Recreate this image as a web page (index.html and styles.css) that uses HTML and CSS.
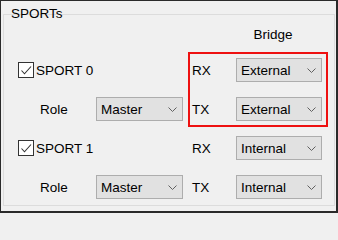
FILE: index.html
```html
<!DOCTYPE html>
<html>
<head>
<meta charset="utf-8">
<link rel="stylesheet" href="styles.css">
</head>
<body>
<div class="window">
  <div class="group">
    <div class="group-title">SPORTs</div>
    <div class="grid">
      <div class="head-spacer"></div>
      <div class="bridge-head">Bridge</div>

      <div class="check"><span class="box"><svg width="14" height="14" viewBox="0 0 14 14"><path d="M2.5 7.5 L5.5 10.8 L12 3.5" fill="none" stroke="#333" stroke-width="1.1"/></svg></span><span>SPORT 0</span></div>
      <div></div>
      <div class="io">RX</div>
      <div class="combo"><span>External</span><svg class="chev" width="9" height="5" viewBox="0 0 9 5"><path d="M0.5 0.5 L4.5 4.5 L8.5 0.5" fill="none" stroke="#606060"/></svg></div>

      <div class="role">Role</div>
      <div class="combo"><span>Master</span><svg class="chev" width="9" height="5" viewBox="0 0 9 5"><path d="M0.5 0.5 L4.5 4.5 L8.5 0.5" fill="none" stroke="#606060"/></svg></div>
      <div class="io">TX</div>
      <div class="combo"><span>External</span><svg class="chev" width="9" height="5" viewBox="0 0 9 5"><path d="M0.5 0.5 L4.5 4.5 L8.5 0.5" fill="none" stroke="#606060"/></svg></div>

      <div class="check"><span class="box"><svg width="14" height="14" viewBox="0 0 14 14"><path d="M2.5 7.5 L5.5 10.8 L12 3.5" fill="none" stroke="#333" stroke-width="1.1"/></svg></span><span>SPORT 1</span></div>
      <div></div>
      <div class="io">RX</div>
      <div class="combo"><span>Internal</span><svg class="chev" width="9" height="5" viewBox="0 0 9 5"><path d="M0.5 0.5 L4.5 4.5 L8.5 0.5" fill="none" stroke="#606060"/></svg></div>

      <div class="role">Role</div>
      <div class="combo"><span>Master</span><svg class="chev" width="9" height="5" viewBox="0 0 9 5"><path d="M0.5 0.5 L4.5 4.5 L8.5 0.5" fill="none" stroke="#606060"/></svg></div>
      <div class="io">TX</div>
      <div class="combo"><span>Internal</span><svg class="chev" width="9" height="5" viewBox="0 0 9 5"><path d="M0.5 0.5 L4.5 4.5 L8.5 0.5" fill="none" stroke="#606060"/></svg></div>
    </div>
    <div class="highlight"></div>
  </div>
</div>
</body>
</html>
```

FILE: styles.css
```css
html, body {
  margin: 0;
  padding: 0;
  background: #f0f0f0;
  overflow: hidden;
}
body {
  font-family: "Liberation Sans", Arial, sans-serif;
  font-size: 13.5px;
  color: #000;
}
.window {
  box-sizing: border-box;
  width: 338px;
  height: 213px;
  border-style: solid;
  border-color: #2a2a2a;
  border-width: 1px 2px 2px 1px;
  background: #f0f0f0;
  padding: 13px 1px 5px 2px;
}
.group {
  position: relative;
  box-sizing: border-box;
  height: 192px;
  border: 1px solid #dcdcdc;
}
.group-title {
  display: block;
  width: max-content;
  height: 8px;
  margin: -9px 0 0 5px;
  padding: 0 2px;
  background: #f0f0f0;
  line-height: 16px;
}
.grid {
  display: grid;
  grid-template-columns: 78px 87px 53px 86px;
  grid-template-rows: 13px 24px 24px 24px 24px;
  row-gap: 15px;
  margin: 16px 0 0 14px;
}
.head-spacer {
  grid-column: 1 / 4;
}
.bridge-head {
  text-align: center;
  padding-right: 12px;
  line-height: 13px;
  margin-top: -2px;
}
.check {
  display: flex;
  align-items: center;
  gap: 2px;
}
.box {
  box-sizing: border-box;
  width: 16px;
  height: 16px;
  border: 1px solid #333;
  background: #fff;
  display: flex;
  align-items: center;
  justify-content: center;
}
.role {
  display: flex;
  align-items: center;
  padding-left: 22px;
}
.io {
  display: flex;
  align-items: center;
  padding-left: 9px;
}
.combo {
  box-sizing: border-box;
  height: 24px;
  border: 1px solid #adadad;
  background: #e1e1e1;
  display: flex;
  align-items: center;
  justify-content: space-between;
  padding: 0 5px 0 4px;
}
.chev {
  display: block;
}
.highlight {
  position: absolute;
  left: 184px;
  top: 37px;
  width: 140px;
  height: 75px;
  box-sizing: border-box;
  border: 2px solid #ee1111;
}
```
